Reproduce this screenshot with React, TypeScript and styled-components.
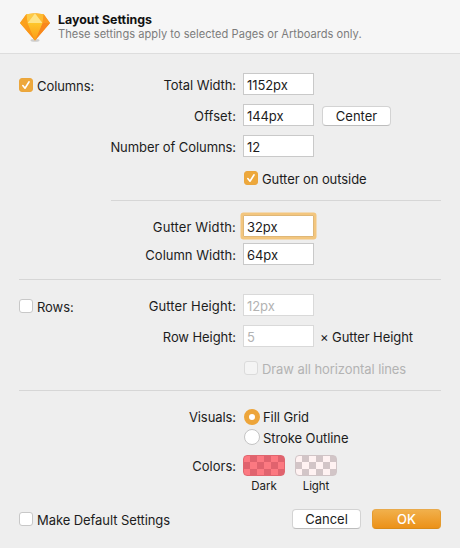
import React from "react";
import styled, { createGlobalStyle, css } from "styled-components";

const GlobalStyle = createGlobalStyle`
  * { box-sizing: border-box; }
  body { margin: 0; background: #eeeeee; }
`;

const Dialog = styled.main`
  display: flex;
  flex-direction: column;
  width: 460px;
  height: 548px;
  overflow: hidden;
  background: #eeeeee;
  color: #1c1c1c;
  font: 13px/20px Inter, sans-serif;
  letter-spacing: -0.08px;
  white-space: nowrap;
`;

const Header = styled.header`
  display: flex;
  flex: none;
  height: 54px;
  padding: 12px 0 0 19px;
  gap: 7px;
  background: #f6f6f6;
  border-bottom: 1px solid #dddddd;
`;

const Logo = styled.svg`
  display: block;
  flex: none;
  width: 32px;
  height: 31px;
`;

const Title = styled.h1`
  margin: 0;
  color: #111;
  font-size: 12.4px;
  font-weight: 700;
  line-height: 15px;
  letter-spacing: 0;
`;

const Subtitle = styled.p`
  margin: 0;
  color: #7c7c7c;
  font-size: 11.1px;
  line-height: 15px;
  letter-spacing: 0.02px;
`;

const Row = styled.div<{ $top?: number; $height?: number }>`
  display: grid;
  flex: none;
  grid-template-columns: 92px 125px 1fr;
  grid-template-rows: 100%;
  align-items: center;
  height: ${(p) => p.$height ?? 22}px;
  margin: ${(p) => p.$top ?? 0}px 19px 0;
`;

const Lead = styled.div`
  padding-top: 2px;
`;

const FieldLabel = styled.span<{ $drop?: number; $tracking?: number }>`
  grid-column: 2;
  justify-self: end;
  padding-top: ${(p) => p.$drop ?? 2}px;
  letter-spacing: ${(p) => p.$tracking ?? -0.08}px;
`;

const Content = styled.div<{ $indent?: number }>`
  grid-column: 3;
  display: flex;
  align-items: center;
  padding-left: ${(p) => p.$indent ?? 7}px;
`;

const Field = styled.input<{ $focused?: boolean }>`
  width: 71px;
  height: 22px;
  padding: 1px 0 0 3px;
  border: 1px solid #c9c9c9;
  border-radius: 0;
  outline: none;
  background: #fff;
  color: #1c1c1c;
  font: inherit;
  letter-spacing: inherit;
  &:disabled {
    border-color: #d9d9d9;
    color: #b3b3b3;
  }
  ${(p) =>
    p.$focused &&
    css`
      border-color: #dfb777;
      box-shadow: 0 0 0 2.5px #f3c67e;
      border-radius: 1px;
    `}
`;

const Divider = styled.hr<{ $top: number; $inset?: boolean }>`
  flex: none;
  height: 1px;
  margin: ${(p) => p.$top}px 19px 0 ${(p) => (p.$inset ? 111 : 19)}px;
  border: 0;
  background: #d6d6d6;
`;

const CheckLabel = styled.label<{ $disabled?: boolean }>`
  display: flex;
  align-items: center;
  gap: 4px;
  color: ${(p) => (p.$disabled ? "#b3b3b3" : "inherit")};
`;

const RadioLabel = styled(CheckLabel)`
  gap: 3px;
`;

const Box = styled.span<{ $checked?: boolean; $disabled?: boolean }>`
  display: flex;
  flex: none;
  width: 14px;
  height: 14px;
  border: 1px solid ${(p) => (p.$checked ? "#eba63c" : p.$disabled ? "#dbdbdb" : "#c8c8c8")};
  border-radius: 3px;
  background: ${(p) => (p.$checked ? "#eda83c" : p.$disabled ? "#f4f4f4" : "#fff")};
`;

const CheckText = styled.span`
  padding-top: 2px;
`;

const Radio = styled.span<{ $on?: boolean }>`
  flex: none;
  width: 16px;
  height: 16px;
  border: ${(p) => (p.$on ? "5px solid #eda53a" : "1px solid #c4c4c4")};
  border-radius: 50%;
  background: #fff;
`;

const Button = styled.button<{ $primary?: boolean }>`
  width: 69px;
  height: 20px;
  padding: 0;
  border: 1px solid #d3d3d3;
  border-bottom-color: #bdbdbd;
  border-radius: 4px;
  background: #fff;
  color: #1c1c1c;
  font: inherit;
  line-height: 19px;
  letter-spacing: 0;
  ${(p) =>
    p.$primary &&
    css`
      border-color: #e9aa4c #e59b2e #d98a19;
      background: linear-gradient(#f1b04b, #ec9118);
      color: #fff;
      font-weight: 500;
    `}
`;

const CenterButton = styled(Button)`
  margin: 1px 0 0 8px;
`;

const Suffix = styled.span`
  padding: 2px 0 0 6px;
`;

const SwatchGroup = styled.div`
  display: flex;
  gap: 10px;
`;

const Swatch = styled.span<{ $a: string; $b: string; $edge: string }>`
  width: 42px;
  height: 21px;
  border: 1px solid ${(p) => p.$edge};
  border-radius: 4px;
  background: repeating-conic-gradient(${(p) => p.$a} 0 25%, ${(p) => p.$b} 0 50%) -1px -1px / 14px 14px;
`;

const SwatchName = styled.span`
  width: 42px;
  font-size: 11.5px;
  line-height: 16px;
  text-align: center;
`;

const Footer = styled.footer`
  display: flex;
  flex: none;
  align-items: center;
  justify-content: space-between;
  height: 22px;
  margin: 14px 19px 0;
`;

const Actions = styled.div`
  display: flex;
  gap: 11px;
`;

function SketchLogo() {
  return (
    <Logo viewBox="0 0 32 31" aria-hidden="true">
      <defs>
        <linearGradient id="left" x2="1" y2="1">
          <stop stopColor="#fba51f" />
          <stop offset="1" stopColor="#fb8a12" />
        </linearGradient>
        <linearGradient id="mid" x2="0" y2="1">
          <stop stopColor="#fec72b" />
          <stop offset="1" stopColor="#fb9a19" />
        </linearGradient>
      </defs>
      <ellipse cx="16" cy="28.4" rx="4.5" ry="1.3" fill="#b9b9b9" opacity=".65" />
      <path d="M7.3 2.2 16 1.3l8.7.9L31 11 16 28.5 1 11Z" fill="#fba320" />
      <path d="M1 11h7.5L16 28.5Z" fill="url(#left)" />
      <path d="M31 11h-7.5L16 28.5Z" fill="#f9871c" />
      <path d="M8.5 11h15L16 28.5Z" fill="url(#mid)" />
      <path d="M7.3 2.2 16 1.3 8.5 11Z" fill="#fdca45" />
      <path d="m24.7 2.2-8.7-.9L23.5 11Z" fill="#fdbc32" />
      <path d="M16 1.3 23.5 11h-15Z" fill="#fee487" />
      <path d="M7.3 2.2 8.5 11H1Z" fill="#fba11d" />
      <path d="M24.7 2.2 23.5 11H31Z" fill="#fa9820" />
    </Logo>
  );
}

interface CheckProps {
  text: string;
  checked?: boolean;
  disabled?: boolean;
}

function Check({ text, checked, disabled }: CheckProps) {
  return (
    <CheckLabel $disabled={disabled}>
      <Box $checked={checked} $disabled={disabled}>
        {checked && (
          <svg width="12" height="12" viewBox="0 0 12 12" fill="none" stroke="#fff" strokeWidth="1.6" strokeLinecap="round" strokeLinejoin="round">
            <path d="m2.8 6.5 2.2 2.7 4.1-6.4" />
          </svg>
        )}
      </Box>
      <CheckText>{text}</CheckText>
    </CheckLabel>
  );
}

export default function App() {
  return (
    <>
      <GlobalStyle />
      <Dialog>
        <Header>
          <SketchLogo />
          <div>
            <Title>Layout Settings</Title>
            <Subtitle>These settings apply to selected Pages or Artboards only.</Subtitle>
          </div>
        </Header>

        <Row $top={19}>
          <Lead><Check text="Columns:" checked /></Lead>
          <FieldLabel>Total Width:</FieldLabel>
          <Content><Field defaultValue="1152px" /></Content>
        </Row>
        <Row $top={9}>
          <FieldLabel $tracking={0.1}>Offset:</FieldLabel>
          <Content>
            <Field defaultValue="144px" />
            <CenterButton>Center</CenterButton>
          </Content>
        </Row>
        <Row $top={9}>
          <FieldLabel>Number of Columns:</FieldLabel>
          <Content><Field defaultValue="12" /></Content>
        </Row>
        <Row $top={10}>
          <Content $indent={8}><Check text="Gutter on outside" checked /></Content>
        </Row>

        <Divider $top={11} $inset />
        <Row $top={14}>
          <FieldLabel $tracking={0.14}>Gutter Width:</FieldLabel>
          <Content><Field defaultValue="32px" $focused /></Content>
        </Row>
        <Row $top={6}>
          <FieldLabel $tracking={0}>Column Width:</FieldLabel>
          <Content><Field defaultValue="64px" /></Content>
        </Row>

        <Divider $top={14} />
        <Row $top={14}>
          <Lead><Check text="Rows:" /></Lead>
          <FieldLabel $tracking={0.12}>Gutter Height:</FieldLabel>
          <Content><Field defaultValue="12px" disabled /></Content>
        </Row>
        <Row $top={9}>
          <FieldLabel>Row Height:</FieldLabel>
          <Content>
            <Field defaultValue="5" disabled />
            <Suffix>× Gutter Height</Suffix>
          </Content>
        </Row>
        <Row $top={10}>
          <Content $indent={8}><Check text="Draw all horizontal lines" disabled /></Content>
        </Row>

        <Divider $top={11} />
        <Row $top={16} $height={20}>
          <FieldLabel $drop={0}>Visuals:</FieldLabel>
          <Content $indent={8}>
            <RadioLabel><Radio $on /><span>Fill Grid</span></RadioLabel>
          </Content>
        </Row>
        <Row $height={20}>
          <Content $indent={8}>
            <RadioLabel><Radio /><CheckText>Stroke Outline</CheckText></RadioLabel>
          </Content>
        </Row>
        <Row $top={8} $height={21}>
          <FieldLabel $drop={0} $tracking={0}>Colors:</FieldLabel>
          <Content>
            <SwatchGroup>
              <Swatch $a="#e0636e" $b="#fc7981" $edge="#e0666f" />
              <Swatch $a="#d2c5c7" $b="#fff2f2" $edge="#d0c4c6" />
            </SwatchGroup>
          </Content>
        </Row>
        <Row $top={2} $height={16}>
          <Content>
            <SwatchGroup>
              <SwatchName>Dark</SwatchName>
              <SwatchName>Light</SwatchName>
            </SwatchGroup>
          </Content>
        </Row>

        <Footer>
          <Check text="Make Default Settings" />
          <Actions>
            <Button>Cancel</Button>
            <Button $primary>OK</Button>
          </Actions>
        </Footer>
      </Dialog>
    </>
  );
}
